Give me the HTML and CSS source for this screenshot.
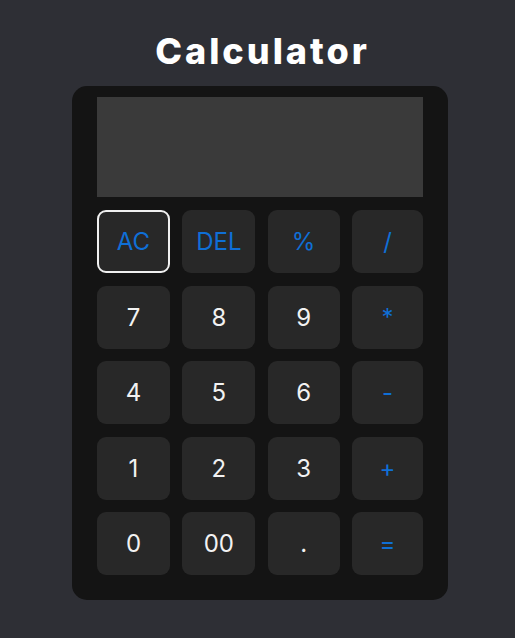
FILE: index.html
```html
<!DOCTYPE html>
<html>
<head>
<meta charset="utf-8">
<link rel="stylesheet" href="styles.css">
</head>
<body>
<main class="page">
  <h1 class="title">Calculator</h1>
  <div class="calc">
    <div class="display"></div>
    <div class="keys">
      <button class="key op active">AC</button>
      <button class="key op">DEL</button>
      <button class="key op">%</button>
      <button class="key op">/</button>
      <button class="key">7</button>
      <button class="key">8</button>
      <button class="key">9</button>
      <button class="key op">*</button>
      <button class="key">4</button>
      <button class="key">5</button>
      <button class="key">6</button>
      <button class="key op">-</button>
      <button class="key">1</button>
      <button class="key">2</button>
      <button class="key">3</button>
      <button class="key op">+</button>
      <button class="key">0</button>
      <button class="key">00</button>
      <button class="key">.</button>
      <button class="key op">=</button>
    </div>
  </div>
</main>
</body>
</html>
```
FILE: styles.css
```css
html, body {
  margin: 0;
  padding: 0;
  background: #2e2f35;
  height: 100%;
}
.page {
  display: flex;
  flex-direction: column;
  align-items: center;
  padding-left: 5px;
  font-family: Inter, "Noto Sans", sans-serif;
}
.title {
  margin: 30px 0 0;
  padding-left: 5px;
  height: 56px;
  font-size: 36px;
  line-height: 42px;
  font-weight: 800;
  letter-spacing: 3px;
  color: #ffffff;
}
.calc {
  box-sizing: border-box;
  width: 376px;
  padding: 11px 25px 25px;
  background: #141414;
  border-radius: 15px;
}
.display {
  height: 100px;
  background: #3a3a3a;
  margin-bottom: 13px;
}
.keys {
  display: grid;
  grid-template-columns: 73px 73px 72px 71px;
  justify-content: space-between;
  grid-auto-rows: 63px;
  row-gap: 12.5px;
}
.key {
  border: 2px solid transparent;
  border-radius: 9px;
  background: #282828;
  color: #f2f2f2;
  font-family: Inter, "Noto Sans", sans-serif;
  font-size: 24px;
  font-weight: 400;
  padding: 0;
}
.key.op {
  color: #0f6fd6;
}
.key.active {
  border-color: #f0f0f0;
}
```
